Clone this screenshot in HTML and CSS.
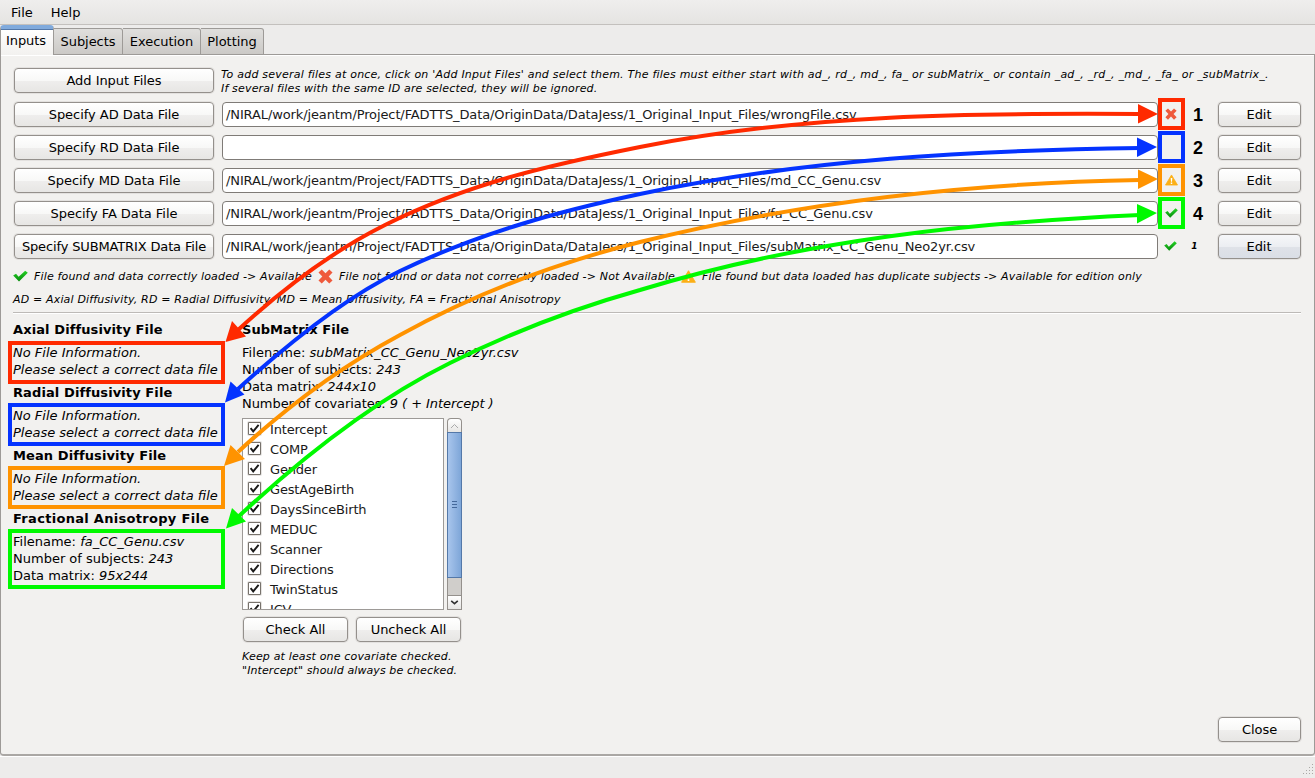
FILE: index.html
```html
<!DOCTYPE html>
<html lang="en">
<head>
<meta charset="utf-8">
<title>FADTTSter</title>
<link rel="stylesheet" href="styles.css">
</head>
<body>
<svg class="defs" width="0" height="0">
  <defs>
    <linearGradient id="gCheck" x1="0" y1="0" x2="0" y2="1"><stop offset="0" stop-color="#25d325"/><stop offset="1" stop-color="#078a0c"/></linearGradient>
    <symbol id="ok" viewBox="0 0 16 12"><path d="M.2 5.400 L3.200 3.600 L6 6.800 L13 .3 L15.800 2.600 L6.400 11.800 Z" fill="url(#gCheck)"/></symbol>
    <symbol id="bad" viewBox="0 0 16 16"><path d="M4 .5 L8 4.600 L12 .5 L15.500 3.800 L11.400 8 L15.500 12.200 L12 15.500 L8 11.400 L4 15.500 L.5 12.200 L4.600 8 L.5 3.800 Z" fill="#ef5a3c"/></symbol>
    <symbol id="warn" viewBox="0 0 16 14"><path d="M8 .8 L15.400 13.200 H.6 Z" fill="#fcb017" stroke="#fcb017" stroke-linejoin="round"/><path d="M7 4.500 H9 L8.600 9 H7.400 Z M7.100 10 H8.900 V11.800 H7.100 Z" fill="#fff"/></symbol>
    <symbol id="box" viewBox="0 0 13 13"><rect x=".5" y=".5" width="12" height="12" fill="#fff" stroke="#77726c"/><path d="M2.600 6.200 L5.200 9.400 L10.600 2.800" fill="none" stroke="#1a1a1a" stroke-width="1.9"/></symbol>
  </defs>
</svg>
<div class="window">
  <nav class="menubar"><span>File</span><span>Help</span></nav>
  <div class="tabs">
    <div class="tab active">Inputs</div><div class="tab t2">Subjects</div><div class="tab t3">Execution</div><div class="tab t4">Plotting</div>
  </div>
  <main class="pane">
    <section class="files">
      <div class="row first"><button class="btn">Add Input Files</button>
        <p class="hint"><span class="h1">To add several files at once, click on 'Add Input Files' and select them. The files must either start with ad_, rd_, md_, fa_ or subMatrix_ or contain _ad_, _rd_, _md_, _fa_ or _subMatrix_.</span><br><span class="h2">If several files with the same ID are selected, they will be ignored.</span></p></div>
      <div class="row"><button class="btn">Specify AD Data File</button><div class="field"><span>/NIRAL/work/jeantm/Project/FADTTS_Data/OriginData/DataJess/1_Original_Input_Files/wrongFile.csv</span></div><div class="status red"><svg width="12" height="12"><use href="#bad"/></svg></div><b class="num">1</b><button class="btn edit">Edit</button></div>
      <div class="row"><button class="btn">Specify RD Data File</button><div class="field"></div><div class="status blue"></div><b class="num">2</b><button class="btn edit">Edit</button></div>
      <div class="row"><button class="btn">Specify MD Data File</button><div class="field"><span>/NIRAL/work/jeantm/Project/FADTTS_Data/OriginData/DataJess/1_Original_Input_Files/md_CC_Genu.csv</span></div><div class="status orange"><svg width="13" height="12"><use href="#warn"/></svg></div><b class="num">3</b><button class="btn edit">Edit</button></div>
      <div class="row"><button class="btn">Specify FA Data File</button><div class="field"><span>/NIRAL/work/jeantm/Project/FADTTS_Data/OriginData/DataJess/1_Original_Input_Files/fa_CC_Genu.csv</span></div><div class="status green"><svg width="13" height="10"><use href="#ok"/></svg></div><b class="num">4</b><button class="btn edit">Edit</button></div>
      <div class="row"><button class="btn long">Specify SUBMATRIX Data File</button><div class="field"><span>/NIRAL/work/jeantm/Project/FADTTS_Data/OriginData/DataJess/1_Original_Input_Files/subMatrix_CC_Genu_Neo2yr.csv</span></div><div class="status plain"><svg width="13" height="10"><use href="#ok"/></svg></div><b class="num small">1</b><button class="btn edit hover">Edit</button></div>
    </section>
    <div class="legend"><svg width="15" height="12"><use href="#ok"/></svg><span class="l1">File found and data correctly loaded -&gt; Available</span><svg class="i2" width="15" height="15"><use href="#bad"/></svg><span class="l2">File not found or data not correctly loaded -&gt; Not Available</span><svg class="i3" width="15" height="13"><use href="#warn"/></svg><span class="l3">File found but data loaded has duplicate subjects -&gt; Available for edition only</span></div>
    <div class="abbr">AD = Axial Diffusivity, RD = Radial Diffusivity, MD = Mean Diffusivity, FA = Fractional Anisotropy</div>
    <div class="rule"></div>
    <section class="info">
      <div class="left">
        <h2>Axial Diffusivity File</h2>
        <div class="box red"><i>No File Information.</i><i>Please select a correct data file</i></div>
        <h2>Radial Diffusivity File</h2>
        <div class="box blue"><i>No File Information.</i><i>Please select a correct data file</i></div>
        <h2>Mean Diffusivity File</h2>
        <div class="box orange"><i>No File Information.</i><i>Please select a correct data file</i></div>
        <h2 class="wide">Fractional Anisotropy File</h2>
        <div class="box green"><div>Filename: <i>fa_CC_Genu.csv</i></div><div>Number of subjects: <i>243</i></div><div>Data matrix: <i>95x244</i></div></div>
      </div>
      <div class="right">
        <h2 class="tight">SubMatrix File</h2>
        <div class="meta"><div class="fn">Filename: <i>subMatrix_CC_Genu_Neo2yr.csv</i></div><div>Number of subjects: <i>243</i></div><div>Data matrix: <i>244x10</i></div><div>Number of covariates: <i>9 ( + Intercept )</i></div></div>
        <div class="listwrap">
          <div class="list">
            <div class="item"><svg width="13" height="13"><use href="#box"/></svg><span>Intercept</span></div>
            <div class="item"><svg width="13" height="13"><use href="#box"/></svg><span>COMP</span></div>
            <div class="item"><svg width="13" height="13"><use href="#box"/></svg><span>Gender</span></div>
            <div class="item"><svg width="13" height="13"><use href="#box"/></svg><span>GestAgeBirth</span></div>
            <div class="item"><svg width="13" height="13"><use href="#box"/></svg><span>DaysSinceBirth</span></div>
            <div class="item"><svg width="13" height="13"><use href="#box"/></svg><span>MEDUC</span></div>
            <div class="item"><svg width="13" height="13"><use href="#box"/></svg><span>Scanner</span></div>
            <div class="item"><svg width="13" height="13"><use href="#box"/></svg><span>Directions</span></div>
            <div class="item"><svg width="13" height="13"><use href="#box"/></svg><span>TwinStatus</span></div>
            <div class="item"><svg width="13" height="13"><use href="#box"/></svg><span>ICV</span></div>
          </div>
          <div class="scroll">
            <div class="arrow up"><svg width="9" height="6"><path d="M1 5 L4.500 1.500 L8 5" fill="none" stroke="#aaa"/></svg></div>
            <div class="thumb"><i></i><i></i><i></i></div>
            <div class="trough"></div>
            <div class="arrow"><svg width="9" height="5"><path d="M1.200 .8 L4.500 3.700 L7.800 .8" fill="none" stroke="#333" stroke-width="1.6"/></svg></div>
          </div>
        </div>
        <div class="pair"><button class="btn">Check All</button><button class="btn">Uncheck All</button></div>
        <p class="note"><span>Keep at least one covariate checked.</span><br>"Intercept" should always be checked.</p>
      </div>
    </section>
    <div class="foot"><button class="btn">Close</button></div>
  </main>
  <footer class="statusbar"><svg width="12" height="12" fill="#aaa8a5"><path d="M9 0h1v1h-1zM9 3h1v1h-1zM6 3h1v1h-1zM9 6h1v1h-1zM6 6h1v1h-1zM3 6h1v1h-1zM9 9h1v1h-1zM6 9h1v1h-1zM3 9h1v1h-1zM0 9h1v1h-1z"/></svg></footer>
  <svg class="arrows" width="1315" height="778" viewBox="0 0 1315 778">
    <g fill="none" stroke-width="4">
      <path stroke="#ff2a00" d="M238 330C288 284 337 249 385 225C470 182.500 555 164 640 147C807 113.700 973 113 1140 114"/>
      <path stroke="#0433ff" d="M238 389C292 340 346 297 400 271C480 232.600 560 211 640 194C807 159 973 150.500 1140 148"/>
      <path stroke="#ff9300" d="M238 452C292 402 346 364 400 335C480 291 560 262 640 242C807 200.300 973 183 1140 180"/>
      <path stroke="#00f900" d="M238 517C309 451 379 398 450 363C513 331.500 577 307.700 640 290C807 239 973 222.500 1140 215"/>
    </g>
    <path fill="#ff2a00" d="M225.500 342L232 321L246 336.500ZM1158 114L1138 104V123.500Z"/>
    <path fill="#0433ff" d="M225 402.500L230.500 381.500L244.500 394.500ZM1157 147L1137 137.500V157Z"/>
    <path fill="#ff9300" d="M224 466L230.500 445L245 459Z M1158 179L1138 169.500V189Z"/>
    <path fill="#00f900" d="M226 528.500L232 508L246 521.500ZM1157 213L1137 204V223.500Z"/>
  </svg>
</div>
</body>
</html>
```
FILE: styles.css
```css
* { box-sizing: border-box; }
body { margin: 0; font: 13px/17px "DejaVu Sans", sans-serif; color: #000; background: #edeceb; }
.defs { position: absolute; }
.window { position: relative; width: 1315px; height: 778px; overflow: hidden; display: flex; flex-direction: column; background: #edeceb; white-space: nowrap; }
.menubar { height: 25px; display: flex; gap: 18px; padding: 4px 11px; border-bottom: 1px solid #c3c0bd; background: linear-gradient(#efeeed, #e5e4e2); }
.tabs { height: 30px; display: flex; align-items: flex-end; position: relative; z-index: 1; }
.tab { height: 27px; padding-top: 4px; text-align: center; border: 1px solid #9d9a97; border-left: 0; background: linear-gradient(#e0dfdd, #cbc9c6); border-radius: 0 3px 0 0; letter-spacing: -.04px; }
.tab.active { width: 54px; height: 30px; padding: 3px 2px 0 0; border: 1px solid #9d9a97; border-top: 4px solid #80aadc; border-bottom: 0; border-radius: 4px 4px 0 0; background: linear-gradient(#fff, #f2f1ef); box-shadow: inset 0 1px #5478a8; }
.t2 { width: 69px; } .t3 { width: 78px; } .t4 { width: 63px; }
.pane { height: 702px; margin-top: -1px; padding: 13px 13px 12px 12px; border: 1px solid #9d9a97; border-bottom: 2px solid #aaa7a4; border-radius: 0 0 4px 4px; background: #f2f1ef; box-shadow: inset 0 1px #fff; display: flex; flex-direction: column; }
.btn { font: 13px/17px "DejaVu Sans", sans-serif; letter-spacing: -.04px; color: #000; height: 25px; padding: 0; border: 1px solid #94908c; border-radius: 4px; background: linear-gradient(#fff, #f8f8f7 50%, #efeeed 51%, #e7e6e4); box-shadow: 0 0 0 1px #e3e1df; }
.files { display: flex; flex-direction: column; gap: 7px; padding-left: 1px; }
.row { display: flex; height: 26px; align-items: flex-start; }
.row.first { margin-bottom: 1px; }
.row > .btn:first-child { width: 200px; margin-right: 8px; }
.btn.long { letter-spacing: -.14px; }
.hint { margin: 0 0 0 -1px; font: italic 11px/14px "DejaVu Sans", sans-serif; }
.h1 { letter-spacing: .22px; }
.h2 { letter-spacing: .17px; }
.field { width: 936px; height: 25px; padding: 3px; border: 1px solid #7f7b77; border-radius: 4px; background: #fff; color: #1a1a1a; letter-spacing: -.11px; }
.status { width: 27px; height: 33px; margin-top: -4px; padding-right: 1px; display: flex; align-items: center; justify-content: center; flex: none; }
.status.plain { padding-right: 3px; padding-bottom: 1px; }
.status.red, .status.blue, .status.orange, .status.green { border: 4px solid; height: 32px; }
.red { border-color: #ff2a00 !important; } .blue { border-color: #0433ff !important; } .orange { border-color: #ff9300 !important; } .green { border-color: #00f900 !important; }
.num { width: 26px; text-align: center; font: bold 18px/20px "Liberation Sans", sans-serif; margin: 3px 7px 0 0; }
.num.small { font: italic bold 9px/20px "DejaVu Sans", sans-serif; padding-right: 7px; margin-top: 2px; }
.edit { width: 83px; padding-right: 1px; }
.edit.hover { background: linear-gradient(#f6f7f9, #eceef2 50%, #dfe2e8 51%, #dadee6); }
.legend { height: 17px; margin-top: 8px; display: flex; align-items: center; font: italic 11px/17px "DejaVu Sans", sans-serif; letter-spacing: .16px; }
.legend svg { flex: none; margin-top: -1px; }
.legend .l1 { margin-left: 6px; width: 279px; } .legend .i2 { margin-left: 5px; } .legend .l2 { margin-left: 6px; width: 336px; } .legend .i3 { margin-left: 6px; } .legend .l3 { margin-left: 6px; letter-spacing: .14px; }
.abbr { font: italic 11px/17px "DejaVu Sans", sans-serif; margin-top: 6px; height: 17px; letter-spacing: .165px; }
.rule { height: 2px; margin-top: 4px; border-top: 1px solid #bdbab7; background: #fff; flex: none; }
.info { display: flex; margin-top: 7px; height: 370px; }
h2 { font: bold 13px/17px "DejaVu Sans", sans-serif; margin: 0; letter-spacing: .1px; }
h2.wide { letter-spacing: .3px; }
h2.tight { letter-spacing: .06px; }
.left { width: 229px; }
.left h2 { height: 20px; }
.box { width: 217px; height: 43px; margin: -1px 0 1px -5px; padding: 0 1px; border: 4px solid; }
.box.red { margin-top: 0; margin-bottom: 0; }
.box.red i:first-child { margin-top: -1px; }
.box i { display: block; }
.box div i { display: inline; }
.box.green { height: 60px; }
.meta { margin-top: 6px; letter-spacing: -.06px; }
.meta .fn { letter-spacing: .04px; }
.listwrap { display: flex; gap: 3px; margin-top: 6px; }
.list { width: 202px; height: 192px; overflow: hidden; border: 1px solid #9d9a97; background: #fff; color: #1a1a1a; letter-spacing: -.18px; }
.item { height: 20px; display: flex; align-items: center; gap: 9px; padding-left: 5px; padding-top: 1px; }
.item svg { margin-top: -2px; border-radius: 1px; box-shadow: 0 0 0 1px #e6e4e2; }
.scroll { width: 15px; height: 192px; display: flex; flex-direction: column; }
.arrow { height: 15px; border: 1px solid #94908c; background: linear-gradient(#fff, #e7e6e4); display: flex; align-items: center; justify-content: center; }
.arrow.up { border-radius: 4px 4px 0 0; border-bottom: 0; height: 14px; }
.thumb { height: 146px; border: 1px solid #5478a8; background: linear-gradient(90deg, #a8c5ec, #7ea6d8); display: flex; flex-direction: column; align-items: center; justify-content: center; gap: 2px; padding-bottom: 2px; }
.thumb i { width: 5px; height: 1px; background: #44689a; }
.trough { flex: 1; background: #d0cecb; border: 1px solid #94908c; border-width: 0 1px; }
.pair { display: flex; gap: 8px; margin: 7px 0 0 1px; }
.pair .btn { width: 105px; }
.note { margin: 8px 0 0; font: italic 11px/14px "DejaVu Sans", sans-serif; letter-spacing: .1px; }
.note span { letter-spacing: .16px; }
.foot { margin-top: auto; display: flex; justify-content: flex-end; }
.foot .btn { width: 83px; }
.statusbar { flex: 1; display: flex; justify-content: flex-end; align-items: flex-end; padding: 0 0 2px; border-top: 1px solid #fff; }
.arrows { position: absolute; left: 0; top: 0; z-index: 2; pointer-events: none; }
```
